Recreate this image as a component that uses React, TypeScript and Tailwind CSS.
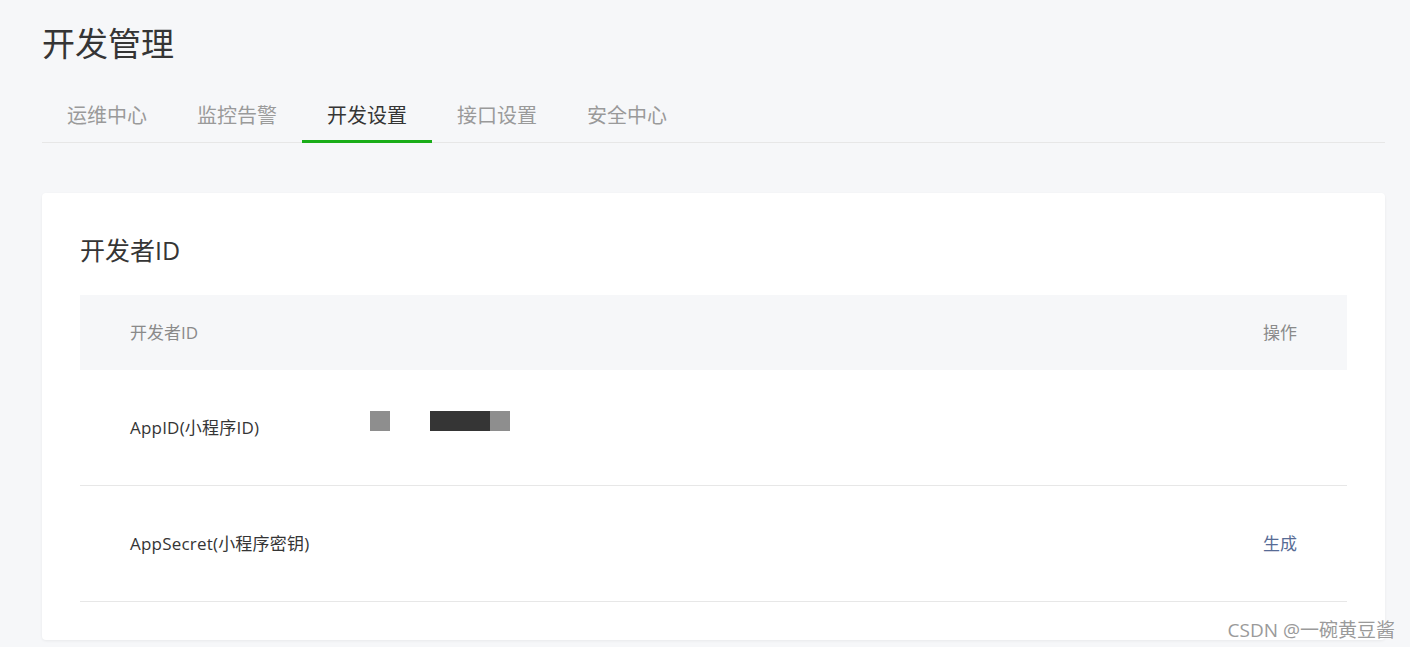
import React, { useState } from "react";

const tabs = ["运维中心", "监控告警", "开发设置", "接口设置", "安全中心"];

const App = () => {
  const [active, setActive] = useState(2);

  return (
    <div
      className="relative min-h-screen bg-[#f6f7f9] pl-[42px] pr-[25px] pt-[22px] pb-[7px] text-[#353535]"
      style={{ fontFamily: '"Open Sans", "Noto Sans CJK SC", sans-serif' }}
    >
      <h1 className="text-[33px] leading-[44px] font-normal">开发管理</h1>

      {/* tabs */}
      <div className="mt-[25px] flex border-b border-[#e7e7e7]">
        {tabs.map((t, i) => (
          <button
            key={t}
            onClick={() => setActive(i)}
            className={`-mb-px flex h-[52px] w-[130px] items-center justify-center border-b-[3px] text-[20px] leading-[28px] ${
              i === active ? "border-[#1aad19] text-[#353535]" : "border-transparent text-[#9a9a9a]"
            }`}
          >
            {t}
          </button>
        ))}
      </div>

      {/* card */}
      <div className="mt-[50px] rounded-[4px] bg-white px-[38px] pt-[40px] pb-[38px] shadow-[0_1px_3px_rgba(0,0,0,0.06)]">
        <h2 className="text-[25px] leading-[34px] font-normal">开发者ID</h2>

        <div className="mt-[28px]">
          <div className="flex h-[75px] items-center justify-between bg-[#f6f7f9] px-[50px] text-[17px] text-[#8a8a8a]">
            <span>开发者ID</span>
            <span>操作</span>
          </div>

          <div className="flex h-[116px] items-center border-b border-[#e7e7e7] px-[50px] text-[17px]">
            <span className="w-[240px] tracking-[0.2px]">AppID(小程序ID)</span>
            <div className="mb-[14px] flex items-center">
              <span className="h-[20px] w-[20px] bg-[#8e8e8e]" />
              <span className="ml-[40px] h-[20px] w-[60px] bg-[#353535]" />
              <span className="h-[20px] w-[20px] bg-[#8e8e8e]" />
            </div>
          </div>

          <div className="flex h-[116px] items-center justify-between border-b border-[#e7e7e7] px-[50px] text-[17px]">
            <span className="tracking-[0.2px]">AppSecret(小程序密钥)</span>
            <a className="cursor-pointer text-[#576b95]">生成</a>
          </div>
        </div>
      </div>

      <div className="absolute right-[15px] bottom-[5px] text-[19px] leading-[24px] text-[#9a9a9a] [text-shadow:0_0_2px_#fff]">
        CSDN @一碗黄豆酱
      </div>
    </div>
  );
};

export default App;
